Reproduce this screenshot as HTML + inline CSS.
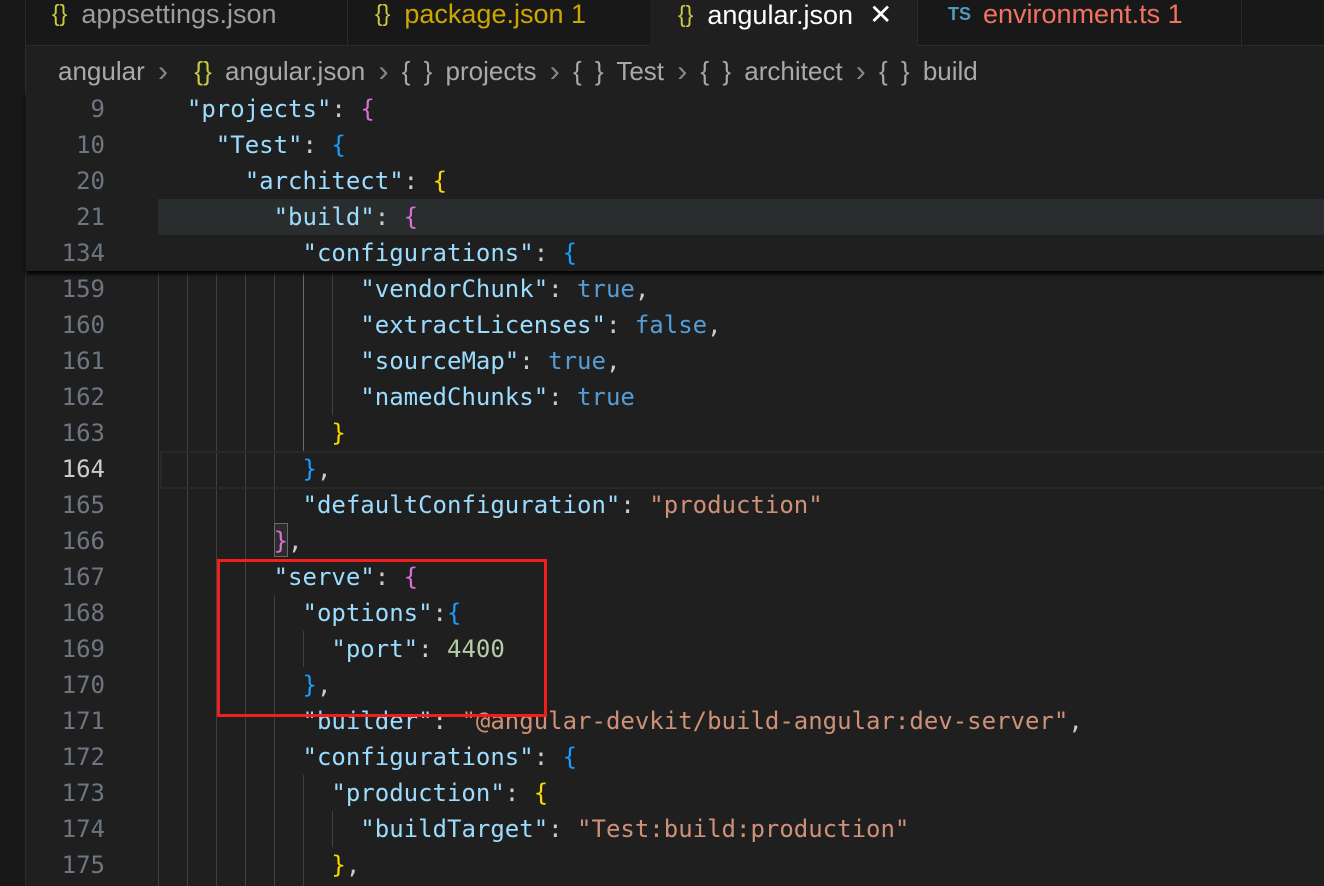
<!DOCTYPE html>
<html><head><meta charset="utf-8"><style>
body{margin:0;width:1324px;height:886px;background:#1f1f1f;overflow:hidden;position:relative;font-family:"DejaVu Sans Mono","Liberation Mono",monospace}
.side{position:absolute;left:0;top:0;width:25px;height:886px;background:#181818;border-right:1px solid #2b2b2b}
.tabs{position:absolute;left:26px;top:0;right:0;height:45px;background:#181818;border-bottom:1px solid #2b2b2b}
.tab{position:absolute;top:0;height:45px;font-family:"Liberation Sans",sans-serif;font-size:27px;line-height:29px;border-right:1px solid #2b2b2b;box-sizing:border-box;padding-left:28px}
.br{color:#cbcb41;font-size:23px;margin-right:14px;position:relative;top:-2px}
.bc{position:absolute;left:58px;top:54px;font-family:"Liberation Sans",sans-serif;font-size:26px;color:#a9a9a9;white-space:pre;word-spacing:6px}
.cv{color:#888;font-size:30px;position:relative;top:1px}
.ln{position:absolute;left:40px;width:65px;text-align:right;font-size:24px;color:#6e7681;line-height:36px}
.code{position:absolute;font-size:24px;line-height:36px;white-space:pre;color:#ccc}
.k{color:#9cdcfe}.s{color:#ce9178}.b{color:#569cd6}.n{color:#b5cea8}
.y{color:#ffd700}.p{color:#da70d6}.u{color:#179fff}.w{color:#ccc}
.g{position:absolute;width:1px;background:#404040}
</style></head><body>
<div class="side"></div>
<div class="tabs">
<div class="tab" style="left:0;width:322px;color:#9d9d9d;padding-left:26px"><span class="br">{}</span>appsettings.json</div>
<div class="tab" style="left:321px;width:304px;color:#cca700;padding-left:28px"><span class="br">{}</span>package.json 1</div>
<div class="tab" style="left:624px;width:268px;background:#1f1f1f;height:46px;color:#fff;padding-left:28px"><span class="br">{}</span>angular.json<span style="margin-left:16px;font-size:28px">✕</span></div>
<div class="tab" style="left:892px;width:324px;color:#f0735f;padding-left:30px"><span style="color:#519aba;font-size:18px;font-weight:bold;margin-right:12px;position:relative;top:-3px">TS</span>environment.ts 1</div>
</div>
<div class="bc">angular <span class="cv">›</span>  <span style="color:#cbcb41">{}</span> angular.json <span class="cv">›</span> { } projects <span class="cv">›</span> { } Test <span class="cv">›</span> { } architect <span class="cv">›</span> { } build</div>

<div class="g" style="left:158px;top:271px;height:615px"></div>
<div class="g" style="left:187px;top:271px;height:615px"></div>
<div class="g" style="left:216px;top:271px;height:615px"></div>
<div class="g" style="left:245px;top:271px;height:615px"></div>
<div class="g" style="left:274px;top:271px;height:252px"></div>
<div class="g" style="left:303px;top:271px;height:180px;background:#6a6a6a"></div>
<div class="g" style="left:332px;top:271px;height:144px"></div>
<div class="g" style="left:274px;top:595px;height:291px"></div>
<div class="g" style="left:303px;top:631px;height:36px"></div>
<div class="g" style="left:303px;top:775px;height:111px"></div>
<div class="g" style="left:332px;top:811px;height:36px"></div>

<div style="position:absolute;left:160px;top:451px;right:0;height:34px;border:2px solid #282828;border-right:none"></div>
<div style="position:absolute;left:274px;top:523px;width:14px;height:34px;border:1px solid #6a6a6a;background:#2a2d2a;box-sizing:border-box"></div>

<div class="ln" style="top:271px">159<br>160<br>161<br>162<br>163<br><span style="color:#ccc">164</span><br>165<br>166<br>167<br>168<br>169<br>170<br>171<br>172<br>173<br>174<br>175</div>
<div class="code" style="left:158px;top:271px">              <span class="k">"vendorChunk"</span>: <span class="b">true</span>,
              <span class="k">"extractLicenses"</span>: <span class="b">false</span>,
              <span class="k">"sourceMap"</span>: <span class="b">true</span>,
              <span class="k">"namedChunks"</span>: <span class="b">true</span>
            <span class="y">}</span>
          <span class="u">}</span>,
          <span class="k">"defaultConfiguration"</span>: <span class="s">"production"</span>
        <span class="p">}</span>,
        <span class="k">"serve"</span>: <span class="p">{</span>
          <span class="k">"options"</span>:<span class="u">{</span>
            <span class="k">"port"</span>: <span class="n">4400</span>
          <span class="u">}</span>,
          <span class="k">"builder"</span>: <span class="s">"@angular-devkit/build-angular:dev-server"</span>,
          <span class="k">"configurations"</span>: <span class="u">{</span>
            <span class="k">"production"</span>: <span class="y">{</span>
              <span class="k">"buildTarget"</span>: <span class="s">"Test:build:production"</span>
            <span class="y">}</span>,</div>

<div style="position:absolute;left:26px;top:91px;right:0;height:180px;background:#1f1f1f;box-shadow:0 3px 4px #000"></div>
<div style="position:absolute;left:158px;top:199px;right:0;height:36px;background:#2a2d2e"></div>
<div class="ln" style="top:91px">9<br>10<br>20<br>21<br>134</div>
<div class="code" style="left:158px;top:91px">  <span class="k">"projects"</span>: <span class="p">{</span>
    <span class="k">"Test"</span>: <span class="u">{</span>
      <span class="k">"architect"</span>: <span class="y">{</span>
        <span class="k">"build"</span>: <span class="p">{</span>
          <span class="k">"configurations"</span>: <span class="u">{</span></div>

<div style="position:absolute;left:217px;top:559px;width:330px;height:158px;border:3px solid #f21d1d;box-sizing:border-box"></div>
</body></html>
